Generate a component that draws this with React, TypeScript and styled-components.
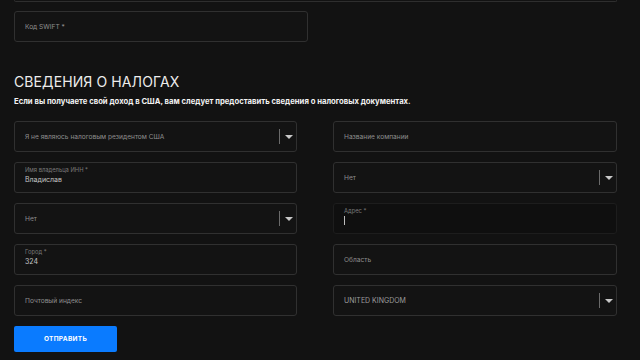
import styled, { createGlobalStyle } from "styled-components";

const GlobalStyle = createGlobalStyle`
    html, body {
        margin: 0;
        padding: 0;
        background: #121212;
        font-family: Inter, "Noto Sans", sans-serif;
        color: #e6e6e6;
    }
    * {
        box-sizing: border-box;
    }
`;

const Page = styled.div`
    width: 640px;
    height: 360px;
    overflow: hidden;
    padding: 0 23px 0 14px;
`;

const PrevEdge = styled.div`
    height: 2px;
    border: 1px solid #2e2e2e;
    border-top: none;
    border-radius: 0 0 3px 3px;
`;

const BankGrid = styled.div`
    display: grid;
    grid-template-columns: 1fr 1fr;
    column-gap: 16px;
    margin-top: 9px;
`;

const SectionTitle = styled.h2`
    margin: 31px 0 0 0;
    font-size: 14px;
    line-height: 17px;
    font-weight: 400;
    color: #ececec;
    letter-spacing: 0.1px;
`;

const SectionNote = styled.p`
    margin: 6px 0 0 0;
    font-size: 7.7px;
    line-height: 11px;
    font-weight: 700;
    color: #f2f2f2;
`;

const TaxGrid = styled.div`
    display: grid;
    grid-template-columns: 283px 284px;
    column-gap: 36px;
    row-gap: 10px;
    margin-top: 14px;
`;

const Field = styled.div<{ $focused?: boolean }>`
    height: 31px;
    border: 1px solid ${p => (p.$focused ? "#1d1d1d" : "#303030")};
    background: ${p => (p.$focused ? "#0f0f0f" : "#131313")};
    border-radius: 3px;
    padding: 0 10px;
    display: flex;
    align-items: center;
`;

const FieldBody = styled.div<{ $filled?: boolean }>`
    flex: 1;
    align-self: stretch;
    display: flex;
    flex-direction: column;
    justify-content: ${p => (p.$filled ? "flex-start" : "center")};
    padding-top: ${p => (p.$filled ? "3px" : "0")};
    min-width: 0;
`;

const FloatLabel = styled.span`
    font-size: 5.8px;
    line-height: 8px;
    color: #7a7a7a;
`;

const Placeholder = styled.span`
    font-size: 6.6px;
    line-height: 10px;
    color: #8e8e8e;
`;

const Value = styled.span<{ $muted?: boolean }>`
    font-size: 7px;
    line-height: 11px;
    color: ${p => (p.$muted ? "#9c9c9c" : "#c4c4c4")};
`;

const Caret = styled.span`
    width: 1px;
    height: 9px;
    margin-top: 1px;
    background: #bdbdbd;
`;

const SelectArrow = styled.div`
    display: flex;
    align-items: center;
    gap: 5px;
    margin-right: -7px;
`;

const Divider = styled.span`
    width: 1px;
    height: 15px;
    background: #6a6a6a;
`;

const Triangle = styled.span`
    width: 0;
    height: 0;
    border-left: 4.5px solid transparent;
    border-right: 4.5px solid transparent;
    border-top: 4.5px solid #c8c8c8;
`;

const SubmitButton = styled.button`
    margin-top: 10px;
    width: 103px;
    height: 26px;
    border: none;
    border-radius: 2px;
    background: #0a7bff;
    color: #ffffff;
    font-family: Inter, "Noto Sans", sans-serif;
    font-size: 6.5px;
    font-weight: 700;
    letter-spacing: 0.3px;
    display: block;
`;

function SelectField({ text, upper }: { text: string; upper?: boolean }) {
    return (
        <Field>
            <FieldBody>
                {upper ? <Value $muted>{text}</Value> : <Placeholder>{text}</Placeholder>}
            </FieldBody>
            <SelectArrow>
                <Divider />
                <Triangle />
            </SelectArrow>
        </Field>
    );
}

function TextField({ text }: { text: string }) {
    return (
        <Field>
            <FieldBody>
                <Placeholder>{text}</Placeholder>
            </FieldBody>
        </Field>
    );
}

function FilledField({ label, value }: { label: string; value: string }) {
    return (
        <Field>
            <FieldBody $filled>
                <FloatLabel>{label}</FloatLabel>
                <Value>{value}</Value>
            </FieldBody>
        </Field>
    );
}

function App() {
    return (
        <Page>
            <GlobalStyle />
            <PrevEdge />
            <BankGrid>
                <TextField text="Код SWIFT *" />
            </BankGrid>

            <SectionTitle>СВЕДЕНИЯ О НАЛОГАХ</SectionTitle>
            <SectionNote>
                Если вы получаете свой доход в США, вам следует предоставить сведения о налоговых документах.
            </SectionNote>

            <TaxGrid>
                <SelectField text="Я не являюсь налоговым резидентом США" />
                <TextField text="Название компании" />

                <FilledField label="Имя владельца ИНН *" value="Владислав" />
                <SelectField text="Нет" />

                <SelectField text="Нет" />
                <Field $focused>
                    <FieldBody $filled>
                        <FloatLabel>Адрес *</FloatLabel>
                        <Caret />
                    </FieldBody>
                </Field>

                <FilledField label="Город *" value="324" />
                <TextField text="Область" />

                <TextField text="Почтовый индекс" />
                <SelectField text="UNITED KINGDOM" upper />
            </TaxGrid>

            <SubmitButton>ОТПРАВИТЬ</SubmitButton>
        </Page>
    );
}

export default App;
